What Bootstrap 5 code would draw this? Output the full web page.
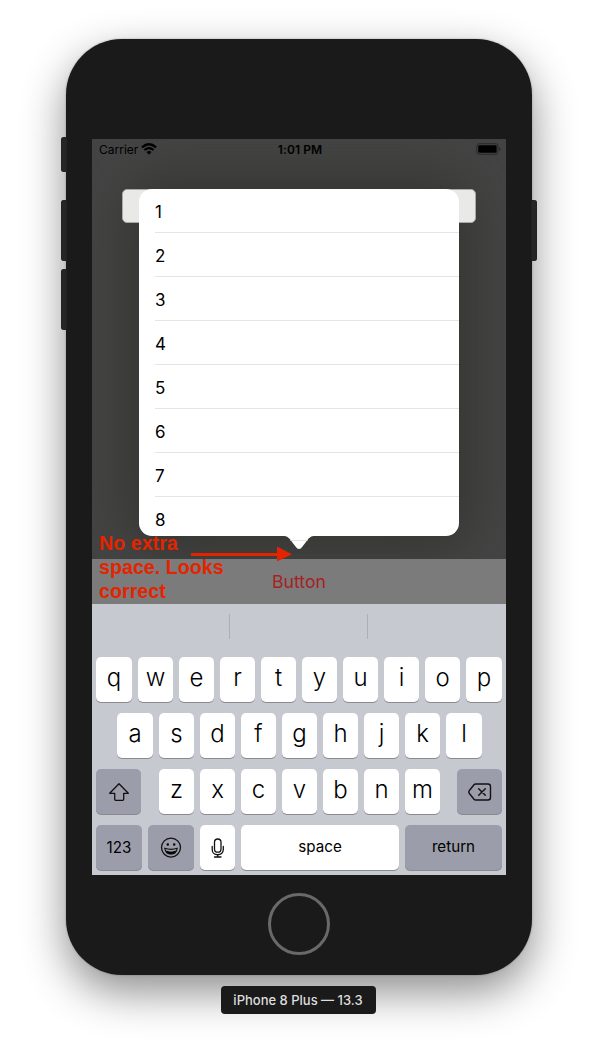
<!DOCTYPE html>
<html lang="en">
<head>
<meta charset="utf-8">
<meta name="viewport" content="width=device-width, initial-scale=1">
<title>iPhone 8 Plus — 13.3</title>
<link href="https://cdn.jsdelivr.net/npm/bootstrap@5.3.0/dist/css/bootstrap.min.css" rel="stylesheet">
<style>
  body { font-family: Inter, "Liberation Sans", sans-serif; color: #000; background: #fff; overflow: hidden; height: 1050px; padding-top: 39px; }
  .phone { width: 466px; height: 936px; border-radius: 56px; background: #1a1a1a; padding-top: 100px;
    box-shadow: 0 0 2px rgba(0,0,0,.3), 0 17px 44px rgba(0,0,0,.45); }
  .side-btn { width: 6px; background: #262626; box-shadow: inset 0 0 1px #000; }
  .side-btn.on-left { left: -5px; border-radius: 3px 0 0 3px; }
  .side-btn.on-right { right: -5px; border-radius: 0 3px 3px 0; }
  .mute { top: 98px; height: 35px; }
  .vol-up, .power { top: 161px; height: 61px; }
  .vol-down { top: 230px; height: 61px; }
  .screen { width: 414px; height: 736px; background: #444; }
  .app-view { height: 420px; overflow: hidden; }
  .popover-shade { left: 47px; top: 50px; width: 320px; height: 347px; border-radius: 13px; box-shadow: 0 0 55px 8px rgba(44,45,38,.7); }
  .status { height: 20px; font-size: 12px; line-height: 20px; padding: 1px 5px 0 7px; z-index: 1; }
  .status > div { flex: 1 1 0; }
  .clock { font-weight: 600; letter-spacing: .1px; }
  .field { margin: 30px 30px 0; height: 34px; border-radius: 5px; background: #e9e9e7; border: 1px solid #a9a9a8; }
  .popover-box { left: 47px; top: 50px; width: 320px; height: 347px; border-radius: 13px; background: #fff; z-index: 2; }
  .popover-list { height: 347px; overflow: hidden; border-radius: 13px; padding-left: 16px; }
  .popover-list li { height: 44px; line-height: 47px; font-size: 17px; border-bottom: 1px solid #e4e4e5; }
  .tip { left: 144px; top: 346px; }
  .bottom-bar { height: 45px; background: #7b7b7b; color: #a92024; font-size: 17.6px; line-height: 46px; }
  .keyboard { height: 271px; background: #c7c9d1; padding: 0 4px; }
  .suggest { height: 53px; padding-top: 10px; }
  .suggest span { width: 1px; height: 25px; background: #adafb5; }
  .suggest span:first-child { margin-left: 133px; }
  .suggest span:last-child { margin-left: 137px; }
  .key-row { gap: 6px; height: 44px; margin-bottom: 12px; }
  .key { width: 35px; height: 45px; border-radius: 5px; background: #fff; box-shadow: 0 1px 0 #898a8e; font-size: 24px; font-weight: 350; line-height: 41px; text-align: center; flex: none; }
  .key.edge { width: 36px; }
  .key.fn { background: #9b9eaa; }
  .key.word { font-size: 15.2px; font-weight: 400; line-height: 43px; }
  .key svg { display: block; margin: 0 auto; }
  .home { width: 62px; height: 62px; border: 3px solid #696969; margin-top: 18px; }
  .note { left: 33px; top: 492px; width: 132px; z-index: 3; font: bold 19.7px/24px "Liberation Sans", Arial, sans-serif; color: #e42400; }
  .note-arrow { left: 125px; top: 507px; z-index: 3; }
  .device-label { width: 155px; height: 28px; margin-top: 11px; right: 1px; border-radius: 4px; background: #1a1a1a; color: #dedede; font-size: 13px; line-height: 29px; font-weight: 500; }
</style>
</head>
<body>
<main class="d-flex flex-column align-items-center">
  <div class="phone position-relative d-flex flex-column align-items-center">
    <i class="side-btn on-left mute position-absolute"></i>
    <i class="side-btn on-left vol-up position-absolute"></i>
    <i class="side-btn on-left vol-down position-absolute"></i>
    <i class="side-btn on-right power position-absolute"></i>

    <section class="screen position-relative">
      <div class="app-view position-relative">
        <div class="popover-shade position-absolute"></div>
        <header class="status d-flex position-relative">
          <div class="d-flex align-items-center"><span>Carrier</span>
            <svg style="margin:-2px 0 0 3px" width="16" height="12" viewBox="0 0 16 12"><path d="M1 4.3Q8-1.9 15 4.3" fill="none" stroke="#000" stroke-width="2.3"/><path d="M3.4 7Q8 3.1 12.6 7" fill="none" stroke="#000" stroke-width="2.1"/><path d="M5.5 9.1Q8 7.1 10.5 9.1L8 11.7Z"/></svg>
          </div>
          <div class="clock text-center">1:01 PM</div>
          <div class="d-flex align-items-center justify-content-end">
            <svg style="margin-top:-1px" width="25" height="12" viewBox="0 0 25 12"><rect x=".7" y=".7" width="21.2" height="10.6" rx="3" fill="none" stroke="#2e2e2e" stroke-width="1.2"/><rect x="2.2" y="2.2" width="18.4" height="7.6" rx="1.4"/><path d="M23 4v4q1.6-.5 1.6-2T23 4Z" fill="#2b2b2b"/></svg>
          </div>
        </header>
        <div class="field position-relative"></div>
        <div class="popover-box position-absolute">
          <ul class="popover-list list-unstyled mb-0">
            <li>1</li><li>2</li><li>3</li><li>4</li><li>5</li><li>6</li><li>7</li><li>8</li>
          </ul>
          <svg class="tip position-absolute" width="32" height="14" viewBox="0 0 32 14"><path d="M0 0V1C4 1 5.500 2.500 7.500 5L12.500 11.500Q16 16.500 19.500 11.500L24.500 5C26.500 2.500 28 1 32 1V0Z" fill="#fff"/><path d="M7.500 5.500H24.500" stroke="#e4e4e4"/></svg>
        </div>
      </div>
      <div class="bottom-bar text-center position-relative">Button</div>
      <div class="keyboard">
        <div class="suggest d-flex"><span></span><span></span></div>
        <div class="key-row d-flex">
          <div class="key edge">q</div><div class="key">w</div><div class="key">e</div><div class="key">r</div><div class="key">t</div><div class="key">y</div><div class="key">u</div><div class="key">i</div><div class="key">o</div><div class="key edge">p</div>
        </div>
        <div class="key-row d-flex" style="padding-left:21px">
          <div class="key edge">a</div><div class="key">s</div><div class="key">d</div><div class="key">f</div><div class="key">g</div><div class="key">h</div><div class="key">j</div><div class="key">k</div><div class="key edge">l</div>
        </div>
        <div class="key-row d-flex">
          <div class="key fn" style="width:45px;margin-right:12px"><svg width="45" height="45" viewBox="0 0 45 45"><path d="M23 14.700L32.300 24.300H27.700V30.300Q27.700 31.300 26.700 31.300H19.700Q18.700 31.300 18.700 30.300V24.300H13.700Z" fill="none" stroke="#111" stroke-width="1.3" stroke-linejoin="round"/></svg></div>
          <div class="key">z</div><div class="key">x</div><div class="key">c</div><div class="key">v</div><div class="key">b</div><div class="key">n</div><div class="key">m</div>
          <div class="key fn" style="width:45px;margin-left:11px"><svg width="45" height="45" viewBox="0 0 45 45" fill="none" stroke="#111" stroke-width="1.4" stroke-linejoin="round" stroke-linecap="round"><path d="M18.700 15H31Q33.500 15 33.500 17.500V28.500Q33.500 31 31 31H18.700Q17.700 31 17 30.200L12.200 24.300Q11.300 23 12.200 21.700L17 15.800Q17.700 15 18.700 15Z"/><path d="M21.700 19.700L28.300 26.300M28.300 19.700L21.700 26.300"/></svg></div>
        </div>
        <div class="key-row d-flex">
          <div class="key fn word" style="width:46px;line-height:45px">123</div>
          <div class="key fn" style="width:46px"><svg width="46" height="45" viewBox="0 0 46 45"><circle cx="23" cy="22.600" r="9.500" fill="none" stroke="#111" stroke-width="1.3"/><circle cx="19.800" cy="19.500" r="1.200"/><circle cx="26.200" cy="19.500" r="1.200"/><path d="M16.800 23.300Q23 25.500 29.200 23.300Q28.300 29.100 23 29.100T16.800 23.300Z" fill="#9b9eaa" stroke="#111" stroke-width="1.1"/><path d="M17.700 25.500Q23 27.800 28.300 25.500Q27 29.100 23 29.100T17.700 25.500Z"/></svg></div>
          <div class="key"><svg width="35" height="45" viewBox="0 0 35 45" fill="none" stroke="#111" stroke-width="1.3" stroke-linecap="round"><rect x="14.500" y="14" width="6.500" height="13.200" rx="3.250"/><path d="M12.200 21.500V24.500C12.200 31.500 23.300 31.500 23.300 24.500V21.500M17.750 29.700V32M14.500 32H21"/></svg></div>
          <div class="key word" style="width:158px">space</div>
          <div class="key fn word" style="width:97px">return</div>
        </div>
      </div>
    </section>
    <div class="home rounded-circle"></div>
    <div class="note position-absolute">No extra space. Looks correct</div>
    <svg class="note-arrow position-absolute" width="101" height="16" viewBox="0 0 101 16" fill="#e42400"><path d="M0 7H86V.500L101 8.200L86 15.500V10H0Z"/></svg>
  </div>
  <div class="device-label text-center position-relative">iPhone 8 Plus — 13.3</div>
</main>
<script src="https://cdn.jsdelivr.net/npm/bootstrap@5.3.0/dist/js/bootstrap.bundle.min.js"></script>
</body>
</html>
